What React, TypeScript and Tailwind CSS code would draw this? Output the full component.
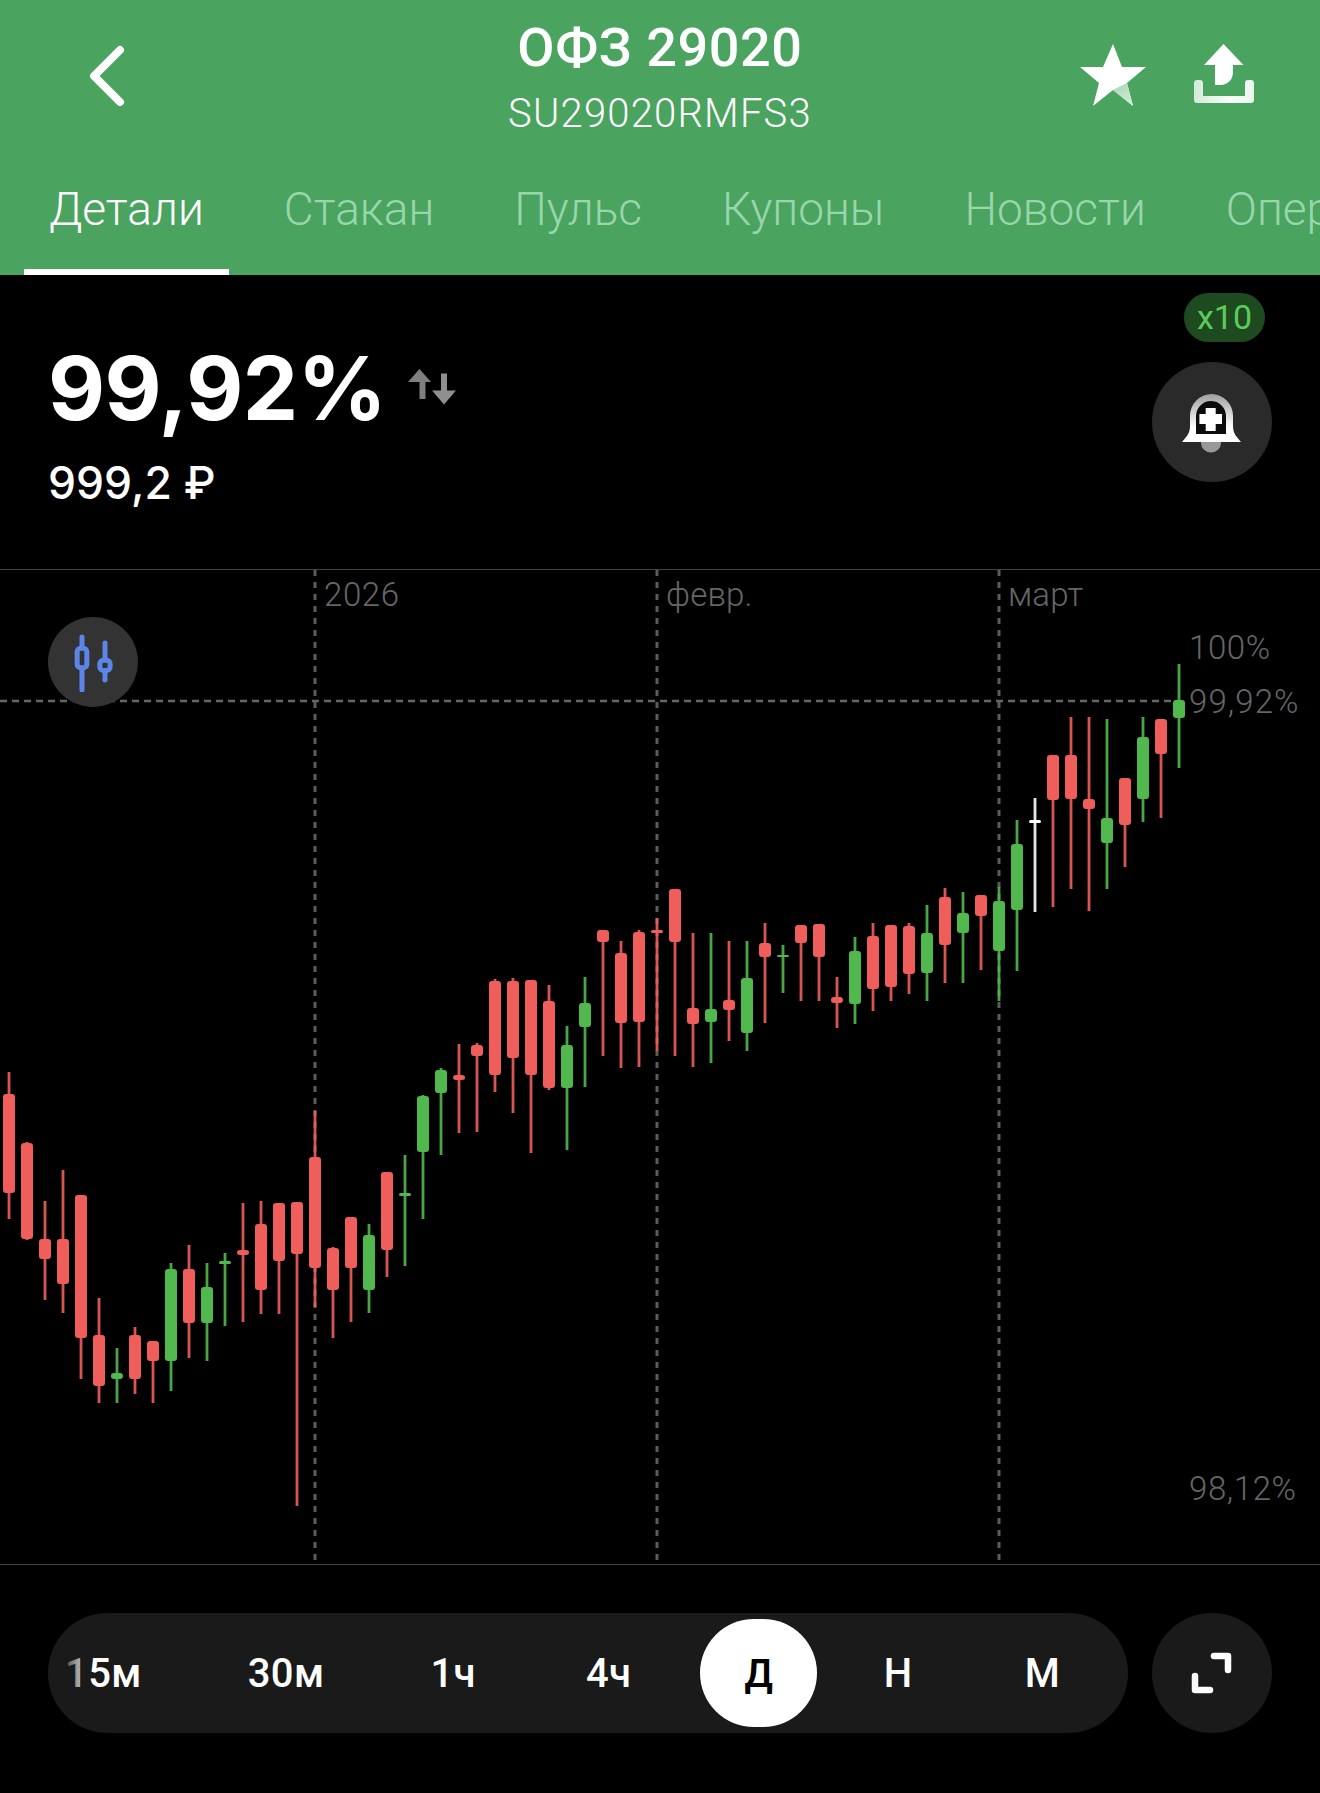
const RED = "#ef5e5b";
const GREEN = "#51b84d";
const WHITE = "#ffffff";

// wickTop, wickBottom, bodyTop, bodyBottom, colour (x = 9 + 18 * index)
const candles: [number, number, number, number, string][] = [
  [1072, 1219, 1094, 1193, RED],
  [1142, 1240, 1143, 1239, RED],
  [1201, 1300, 1239, 1259, RED],
  [1170, 1313, 1239, 1284, RED],
  [1195, 1379, 1195, 1338, RED],
  [1298, 1403, 1335, 1386, RED],
  [1348, 1403, 1373, 1379, GREEN],
  [1327, 1394, 1335, 1379, RED],
  [1341, 1403, 1341, 1361, RED],
  [1263, 1391, 1269, 1361, GREEN],
  [1245, 1358, 1269, 1323, RED],
  [1263, 1361, 1287, 1323, GREEN],
  [1253, 1326, 1261, 1264, GREEN],
  [1203, 1322, 1250, 1255, RED],
  [1201, 1314, 1224, 1290, RED],
  [1203, 1314, 1203, 1261, RED],
  [1202, 1506, 1202, 1254, RED],
  [1111, 1307, 1157, 1268, RED],
  [1247, 1338, 1248, 1290, RED],
  [1217, 1322, 1217, 1268, RED],
  [1224, 1313, 1235, 1290, GREEN],
  [1172, 1277, 1172, 1250, RED],
  [1155, 1266, 1193, 1196, GREEN],
  [1095, 1219, 1096, 1152, GREEN],
  [1068, 1155, 1070, 1093, GREEN],
  [1044, 1133, 1075, 1080, RED],
  [1043, 1132, 1045, 1056, RED],
  [979, 1092, 981, 1075, RED],
  [978, 1113, 981, 1058, RED],
  [980, 1153, 980, 1075, RED],
  [985, 1090, 1001, 1088, RED],
  [1026, 1150, 1045, 1088, GREEN],
  [977, 1087, 1003, 1027, GREEN],
  [930, 1056, 930, 942, RED],
  [941, 1068, 953, 1023, RED],
  [930, 1067, 932, 1022, RED],
  [918, 1051, 930, 933, RED],
  [889, 1056, 889, 942, RED],
  [933, 1067, 1008, 1024, RED],
  [933, 1063, 1009, 1022, GREEN],
  [941, 1041, 1000, 1010, RED],
  [941, 1051, 978, 1033, GREEN],
  [923, 1023, 943, 957, RED],
  [945, 993, 955, 957, GREEN],
  [925, 1001, 925, 943, RED],
  [924, 1001, 924, 957, RED],
  [977, 1028, 997, 1003, RED],
  [937, 1024, 951, 1004, GREEN],
  [923, 1011, 936, 989, RED],
  [925, 1001, 925, 987, RED],
  [923, 994, 926, 974, RED],
  [905, 1001, 933, 973, GREEN],
  [888, 983, 897, 945, RED],
  [892, 983, 913, 933, GREEN],
  [895, 970, 895, 916, RED],
  [887, 1001, 901, 951, GREEN],
  [820, 971, 844, 910, GREEN],
  [798, 912, 820, 823, WHITE],
  [755, 907, 755, 800, RED],
  [717, 889, 755, 799, RED],
  [717, 911, 799, 809, RED],
  [719, 889, 818, 843, GREEN],
  [778, 867, 778, 825, RED],
  [717, 822, 737, 799, GREEN],
  [719, 818, 719, 754, RED],
  [664, 768, 700, 718, GREEN],
];

const tabs = ["Детали", "Стакан", "Пульс", "Купоны", "Новости", "Операции"];

const periods = [
  { label: "15м", cls: "text-[40px] font-medium tracking-[0.4px]" },
  { label: "30м", cls: "ml-[106px] text-[40px] font-medium tracking-[0.4px]" },
  { label: "1ч", cls: "ml-[106px] text-[40px] font-medium tracking-[0.4px]" },
  { label: "4ч", cls: "ml-[110px] text-[40px] font-medium tracking-[0.4px]" },
  {
    label: "Д",
    cls: "-mr-[44px] -mt-[2px] ml-[69px] flex h-[108px] items-center rounded-full bg-white px-[44px] pt-[2px] text-[38px] font-semibold text-black",
  },
  { label: "Н", cls: "ml-[111px] text-[40px] font-medium tracking-[0.4px]" },
  { label: "М", cls: "ml-[112px] text-[40px] font-medium tracking-[0.4px]" },
];

function CandleChart() {
  return (
    <svg viewBox="0 570 1320 994" className="absolute inset-0 h-full w-full">
      {[315, 657, 999].map((x) => (
        <line key={x} x1={x} x2={x} y1={570} y2={1564} stroke="#5c5c5c" strokeWidth="3" strokeDasharray="6 6" />
      ))}
      <line x1={0} x2={1174} y1={701} y2={701} stroke="#666" strokeWidth="2.500" strokeDasharray="7 5" />
      {candles.map(([wt, wb, bt, bb, c], i) => {
        const x = 9 + 18 * i;
        return (
          <g key={i} fill={c}>
            <rect x={x - 1.4} y={wt} width="2.800" height={wb - wt} opacity="0.9" />
            <rect x={x - 6} y={bt} width="12" height={bb - bt} rx={bb - bt < 4 ? 1.5 : 3} />
          </g>
        );
      })}
    </svg>
  );
}

function BackIcon() {
  return (
    <svg width="44" height="68" viewBox="0 0 44 68" fill="none">
      <path d="M33 8 7 34 33 60" stroke="#fff" strokeWidth="8" strokeLinecap="round" strokeLinejoin="round" />
    </svg>
  );
}

function StarIcon() {
  return (
    <svg width="66" height="62" viewBox="0 0 66 62">
      <defs>
        <linearGradient id="starFade" x1="0.2" y1="0" x2="0.8" y2="1">
          <stop offset="0" stopColor="#a9d6b5" />
          <stop offset="1" stopColor="#d3ecd9" />
        </linearGradient>
      </defs>
      <path d="M33 0 42 23H66L47 39 53 62 33 46 13 62 19 39 0 23H23Z" fill="#fff" />
      <path d="M33 46 47 39 53 62Z" fill="url(#starFade)" />
    </svg>
  );
}

function ShareIcon() {
  return (
    <svg width="60" height="60" viewBox="0 0 60 60">
      <defs>
        <linearGradient id="trayFade" x1="0" y1="0" x2="1" y2="0">
          <stop offset="0" stopColor="#d2ead9" />
          <stop offset="0.6" stopColor="#fafdfb" />
          <stop offset="1" stopColor="#eaf6ee" />
        </linearGradient>
      </defs>
      <path d="M3 36h3a3 3 0 0 1 3 3v13h42V39a3 3 0 0 1 3-3h3a3 3 0 0 1 3 3v17a3 3 0 0 1-3 3H3a3 3 0 0 1-3-3V39a3 3 0 0 1 3-3Z" fill="url(#trayFade)" />
      <path d="M29.5 0 49.5 21H39v7c0 8-6 13-12 13h-6V21H10Z" fill="#fff" />
    </svg>
  );
}

function ArrowsIcon() {
  return (
    <svg width="48" height="36" viewBox="0 0 48 36">
      <path d="M11.5 0 23 13h-5.5v17h-6V13H0Z" fill="#7f7f7f" />
      <path d="M33 4.5h6v17h9L36 35.500 24 21.500h9Z" fill="#8f8f8f" />
    </svg>
  );
}

function BellIcon() {
  return (
    <svg width="60" height="60" viewBox="0 0 60 60">
      <defs>
        <linearGradient id="bellFade" x1="0" y1="0" x2="0" y2="1">
          <stop offset="0" stopColor="#9f9f9f" />
          <stop offset="0.7" stopColor="#fff" />
        </linearGradient>
      </defs>
      <path d="M19 48h20v1a10 9.500 0 0 1-20 0Z" fill="#989898" />
      <path d="M14 40h30V22a15 15 0 0 0-30 0Z" fill="#0c0c0c" />
      <path
        fillRule="evenodd"
        d="M0 48C4 43 8 40 8 32V22a21.500 22 0 0 1 43 0v10c0 8 4 11 8 16ZM14 40h30V22a15 15 0 0 0-30 0Z"
        fill="url(#bellFade)"
      />
      <path d="M23.700 14h10v6h6.300v10h-6.300v7h-10v-7h-6.300V20h6.300Z" fill="#fff" />
    </svg>
  );
}

function CandleTypeIcon() {
  return (
    <svg width="54" height="60" viewBox="0 0 54 60" fill="none" stroke="#5b86e8" strokeWidth="5" strokeLinecap="round">
      <path d="M16 5V16M16 36V58" />
      <rect x="11.150" y="16.150" width="9.700" height="19.700" rx="3.500" />
      <path d="M39 11V28M39 39V48" />
      <rect x="33.850" y="28.150" width="10.300" height="10.400" rx="3.500" />
    </svg>
  );
}

function ExpandIcon() {
  return (
    <svg width="42" height="42" viewBox="0 0 42 42" fill="none" stroke="#fff" strokeWidth="6.500" strokeLinecap="round" strokeLinejoin="round">
      <path d="M23 4H37V18" />
      <path d="M4 24V38H19" />
    </svg>
  );
}

export default function App() {
  return (
    <div className="flex h-[1793px] w-[1320px] flex-col overflow-hidden bg-black font-[Roboto] text-white">
      <header className="flex h-[275px] shrink-0 flex-col bg-[#4aa35f]">
        <div className="flex items-start justify-between">
          <div className="w-[300px] pl-[87px] pt-[42px]">
            <BackIcon />
          </div>
          <div className="flex flex-col items-center pt-[19px]">
            <h1 className="text-[54px] leading-[58px] font-medium tracking-[0.6px]">ОФЗ 29020</h1>
            <p className="mt-[14px] text-[40px] leading-[46px] font-light tracking-[1.2px]">SU29020RMFS3</p>
          </div>
          <div className="flex w-[300px] items-start justify-end gap-[48px] pt-[44px] pr-[66px]">
            <StarIcon />
            <ShareIcon />
          </div>
        </div>
        <nav className="mt-auto flex h-[100px] gap-[32px] overflow-hidden pl-[24px]">
          {tabs.map((t, i) => (
            <span
              key={t}
              className={
                i === 0
                  ? "-mr-[1px] flex shrink-0 items-center border-b-[6px] border-white pb-[26px] pl-[25px] pr-[25px] text-[46px] font-light"
                  : "flex shrink-0 items-center border-b-[6px] border-transparent px-[24px] pb-[26px] text-[46px] font-light text-[#98d6ac]"
              }
            >
              {t}
            </span>
          ))}
        </nav>
      </header>

      <section className="flex h-[294px] shrink-0 items-start justify-between">
        <div className="pl-[48px] pt-[60px]">
          <div className="flex items-start gap-[22px]">
            <span className="font-[Inter] text-[88px] leading-[106px] font-bold tracking-[-0.6px]">99,92%</span>
            <span className="pt-[34px]">
              <ArrowsIcon />
            </span>
          </div>
          <div className="mt-[17px] font-[Inter] text-[44.500px] leading-[50px] font-medium">999,2 ₽</div>
        </div>
        <div className="flex flex-col items-end pt-[18px] pr-[48px]">
          <span className="mr-[7px] flex h-[49px] w-[81px] items-center justify-center rounded-full bg-[#1d4a1f] text-[34px] text-[#5ccb5c]">
            x10
          </span>
          <span className="mt-[20px] flex h-[120px] w-[120px] items-center justify-center rounded-full bg-[#2a2a2a] pt-[3px]">
            <BellIcon />
          </span>
        </div>
      </section>

      <section className="relative h-[996px] shrink-0 border-y border-[#444]">
        <CandleChart />
        <span className="absolute left-[324px] top-[5px] text-[33px] leading-[40px] font-light tracking-[0.6px] text-[#666]">2026</span>
        <span className="absolute left-[666px] top-[5px] text-[33px] leading-[40px] font-light tracking-[0.2px] text-[#666]">февр.</span>
        <span className="absolute left-[1008px] top-[5px] text-[33px] leading-[40px] font-light tracking-[0.2px] text-[#666]">март</span>
        <span className="absolute left-[1189px] top-[58px] text-[33px] leading-[40px] font-light tracking-[0.6px] text-[#666]">100%</span>
        <span className="absolute left-[1189px] top-[112px] text-[33px] leading-[40px] font-light tracking-[1.1px] text-[#666]">99,92%</span>
        <span className="absolute left-[1189px] top-[899px] text-[33px] leading-[40px] font-light tracking-[0.6px] text-[#666]">98,12%</span>
        <span className="absolute left-[48px] top-[47px] flex h-[90px] w-[90px] items-center justify-center rounded-full bg-[#333]">
          <CandleTypeIcon />
        </span>
      </section>

      <footer className="flex items-start gap-[24px] pl-[48px] pt-[48px]">
        <div className="relative flex h-[120px] w-[1080px] items-center overflow-hidden rounded-full bg-[#1a1a1a] pl-[17px] pt-[2px]">
          {periods.map((p) => (
            <span key={p.label} className={p.cls}>
              {p.label}
            </span>
          ))}
          <span className="absolute left-[16px] top-0 h-full w-[28px] bg-linear-to-r from-[#1a1a1a]/80 to-transparent" />
        </div>
        <span className="flex h-[120px] w-[120px] items-center justify-center rounded-full bg-[#1a1a1a]">
          <ExpandIcon />
        </span>
      </footer>
    </div>
  );
}
